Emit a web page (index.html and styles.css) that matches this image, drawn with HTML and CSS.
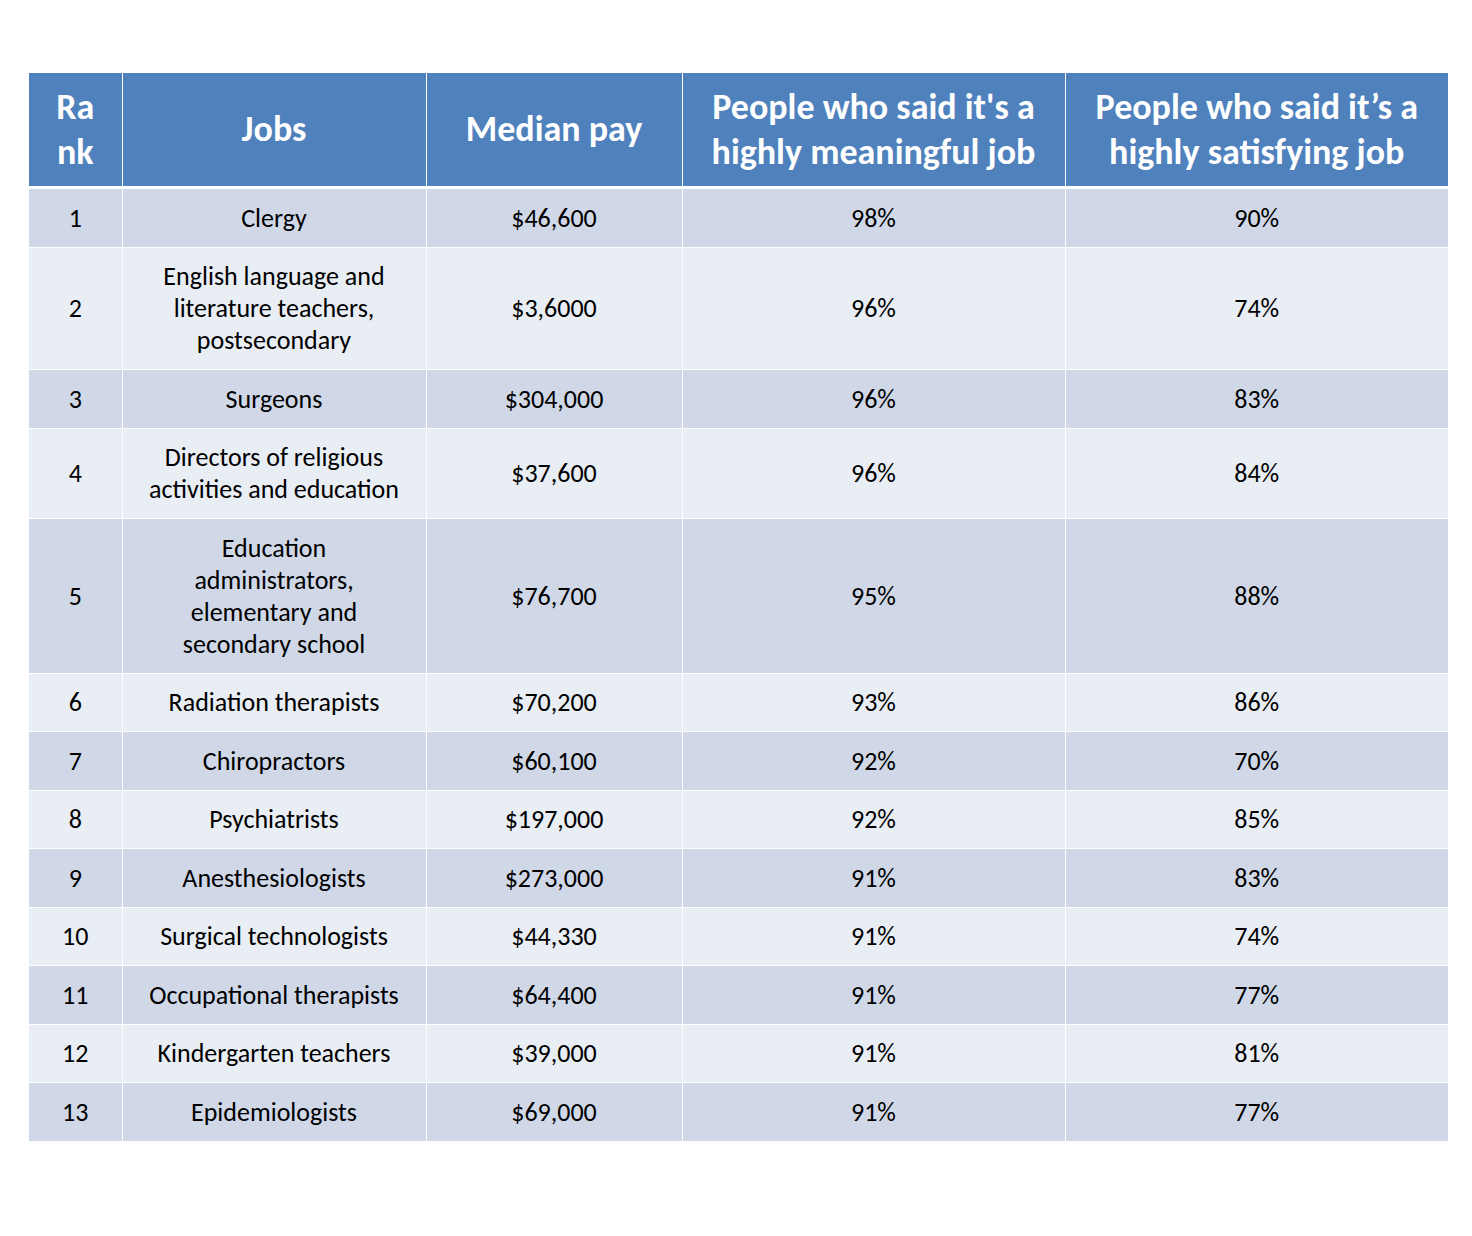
FILE: index.html
```html
<!DOCTYPE html>
<html>
<head>
<meta charset="utf-8">
<link rel="stylesheet" href="styles.css">
</head>
<body>
<div class="page">
<table class="jobs">
  <colgroup>
    <col class="c-rank"><col class="c-job"><col class="c-pay"><col class="c-pct"><col class="c-pct">
  </colgroup>
  <thead>
    <tr>
      <th>Ra<br>nk</th>
      <th>Jobs</th>
      <th>Median pay</th>
      <th>People who said it's a<br>highly meaningful job</th>
      <th>People who said it’s a<br>highly satisfying job</th>
    </tr>
  </thead>
  <tbody>
    <tr><td>1</td><td>Clergy</td><td>$46,600</td><td>98%</td><td>90%</td></tr>
    <tr><td>2</td><td>English language and<br>literature teachers,<br>postsecondary</td><td>$3,6000</td><td>96%</td><td>74%</td></tr>
    <tr><td>3</td><td>Surgeons</td><td>$304,000</td><td>96%</td><td>83%</td></tr>
    <tr><td>4</td><td>Directors of religious<br>activities and education</td><td>$37,600</td><td>96%</td><td>84%</td></tr>
    <tr><td>5</td><td>Education<br>administrators,<br>elementary and<br>secondary school</td><td>$76,700</td><td>95%</td><td>88%</td></tr>
    <tr><td>6</td><td>Radiation therapists</td><td>$70,200</td><td>93%</td><td>86%</td></tr>
    <tr><td>7</td><td>Chiropractors</td><td>$60,100</td><td>92%</td><td>70%</td></tr>
    <tr><td>8</td><td>Psychiatrists</td><td>$197,000</td><td>92%</td><td>85%</td></tr>
    <tr><td>9</td><td>Anesthesiologists</td><td>$273,000</td><td>91%</td><td>83%</td></tr>
    <tr><td>10</td><td>Surgical technologists</td><td>$44,330</td><td>91%</td><td>74%</td></tr>
    <tr><td>11</td><td>Occupational therapists</td><td>$64,400</td><td>91%</td><td>77%</td></tr>
    <tr><td>12</td><td>Kindergarten teachers</td><td>$39,000</td><td>91%</td><td>81%</td></tr>
    <tr><td>13</td><td>Epidemiologists</td><td>$69,000</td><td>91%</td><td>77%</td></tr>
  </tbody>
</table>
</div>
</body>
</html>
```

FILE: styles.css
```css
html, body {
  margin: 0;
  padding: 0;
  background: #ffffff;
}
.page {
  padding: 73px 24px 0 29px;
}
.jobs {
  width: 1419px;
  border-collapse: collapse;
  table-layout: fixed;
  font-family: Carlito, Calibri, "Lato", "Liberation Sans", sans-serif;
  color: #000000;
}
.c-rank { width: 93px; }
.c-job { width: 304px; }
.c-pay { width: 256px; }
.c-pct { width: 383px; }
.jobs th {
  background: #4f81bd;
  color: #ffffff;
  font-weight: bold;
  font-size: 36px;
  line-height: 45px;
  height: 113px;
  padding: 0 4px;
  text-align: center;
  vertical-align: middle;
  border-left: 1px solid #ffffff;
  border-right: 1px solid #ffffff;
  border-bottom: 3px solid #ffffff;
}
.jobs td {
  font-size: 26px;
  line-height: 32px;
  padding: 12.75px 4px;
  text-align: center;
  vertical-align: middle;
  border: 1px solid #ffffff;
}
.jobs th:first-child, .jobs td:first-child { border-left: none; }
.jobs th:last-child, .jobs td:last-child { border-right: none; }
.jobs tbody tr:last-child td { border-bottom: none; }
.jobs tbody tr:nth-child(odd) td { background: #d0d8e8; }
.jobs tbody tr:nth-child(even) td { background: #e9edf4; }
```
